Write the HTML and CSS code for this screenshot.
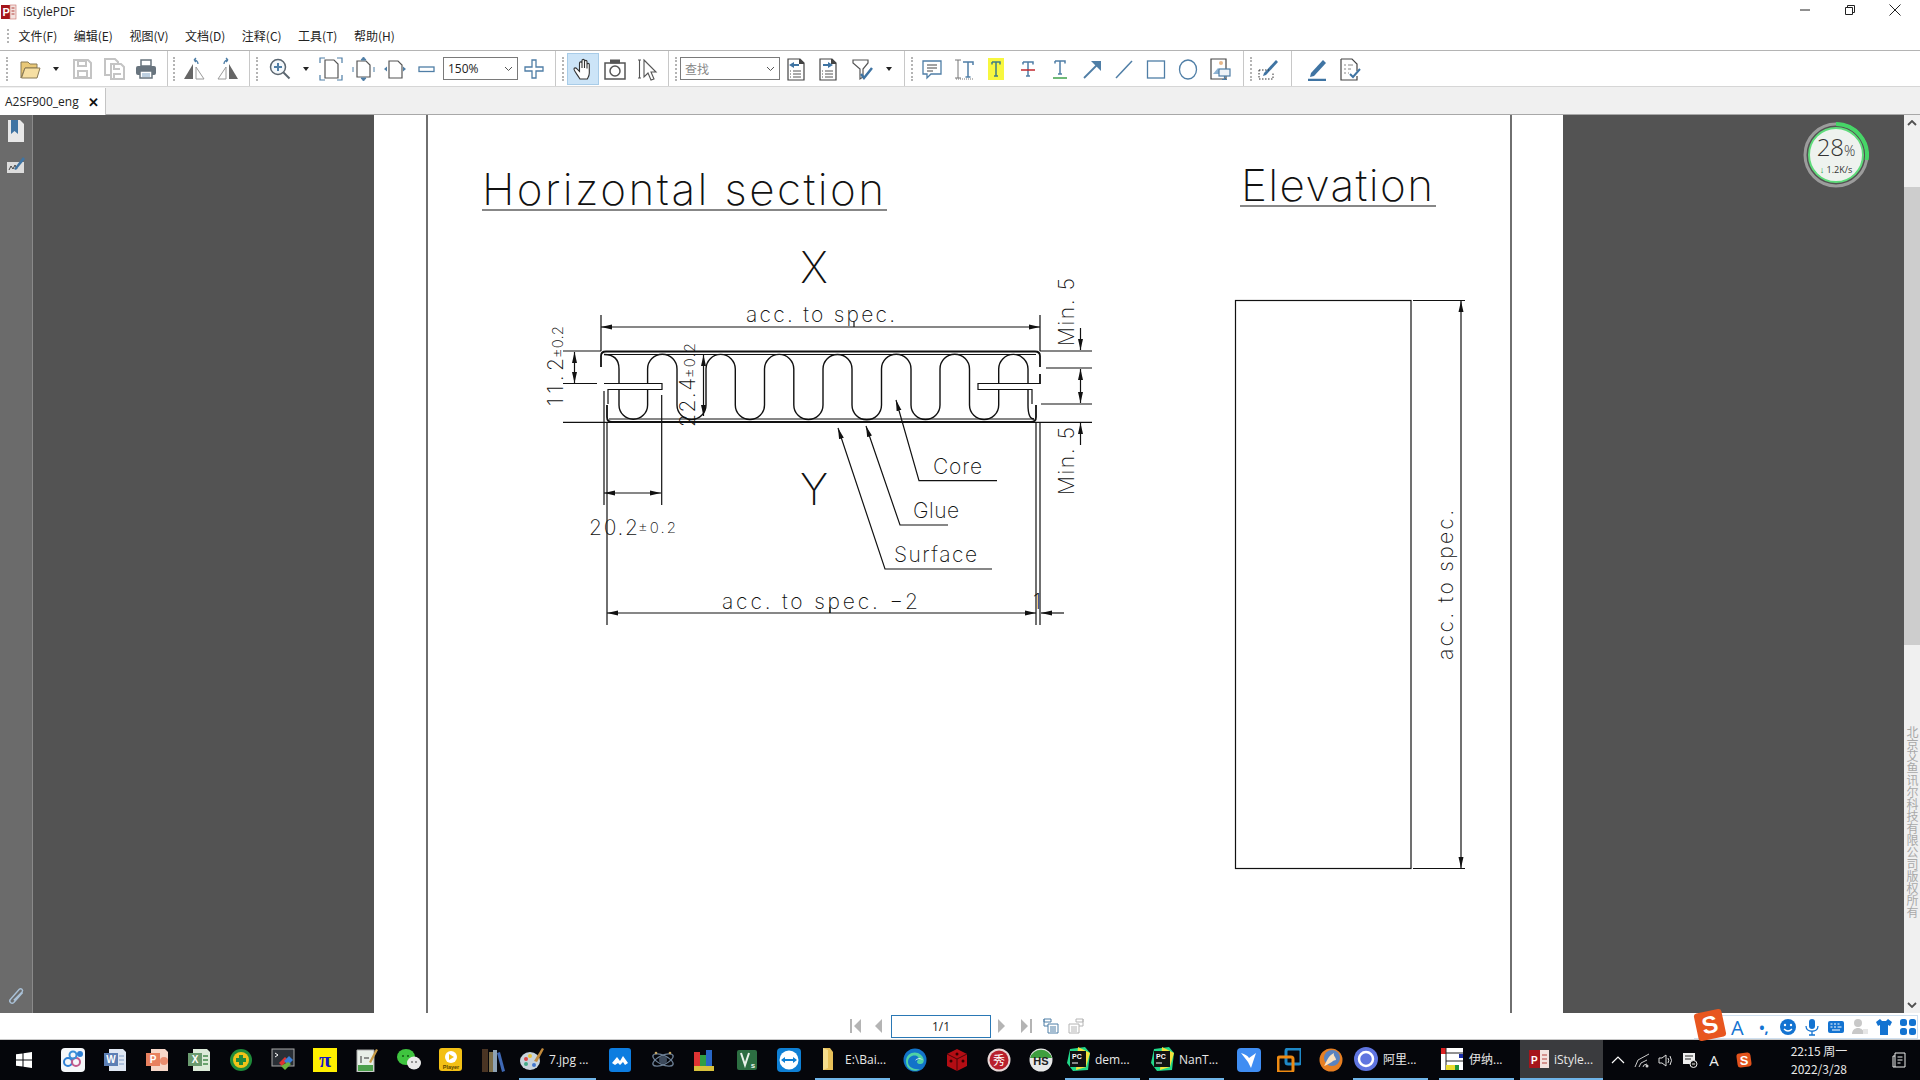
FILE: index.html
```html
<!DOCTYPE html>
<html lang="zh-CN">
<head>
    <meta charset="UTF-8">
    <title>iStylePDF</title>
    <link rel="stylesheet" href="styles.css">
</head>
<body>
    <div id="titlebar">
        <div class="title-left">
            <svg width="16" height="16" viewBox="0 0 16 16"><rect x="0" y="1" width="10" height="14" fill="#a5151b"/><rect x="9" y="1" width="6" height="14" fill="#f3e3e0" stroke="#c96b66" stroke-width=".6"/><text x="1.4" y="12" class="logo-p">P</text><path d="M10.5 4h3M10.5 7h3M10.5 10h3" stroke="#b3403c"/></svg>
            <span>iStylePDF</span>
        </div>
        <div class="win-controls">
            <svg width="14" height="14" viewBox="0 0 14 14"><path d="M2 7h10" stroke="#222" fill="none"/></svg>
            <svg width="14" height="14" viewBox="0 0 14 14"><path d="M2.5 4.5h7v7h-7zM4.5 4.5v-2h7v7h-2" stroke="#222" fill="none"/></svg>
            <svg width="14" height="14" viewBox="0 0 14 14"><path d="M1.5 1.5l11 11M12.5 1.5l-11 11" stroke="#222" fill="none"/></svg>
        </div>
    </div>
    <div id="menubar">
        <i class="grip"></i>
        <span>文件(F)</span><span>编辑(E)</span><span>视图(V)</span><span>文档(D)</span><span>注释(C)</span><span>工具(T)</span><span>帮助(H)</span>
    </div>

    <div id="toolbar">
        <div class="group">
            <i class="grip grip-first"></i>
            <button class="btn"><svg viewBox="0 0 24 24"><path d="M3 21V5h7l2 2h7v4H7L3 21z" fill="#e9c877" stroke="#8a7a55"/><path d="M3.5 21l3.5-10h15l-3 10z" fill="#f6dfa3" stroke="#8a7a55"/></svg></button>
            <button class="caret"><i></i></button>
            <button class="btn"><svg viewBox="0 0 24 24"><path d="M4 3h14l3 3v15H4z" fill="#fff" stroke="#c4c4c4" stroke-width="2"/><path d="M8 4h8v5H8zM8 14h9v6H8z" fill="none" stroke="#c4c4c4" stroke-width="2"/></svg></button>
            <button class="btn"><svg viewBox="0 0 24 24"><path d="M3 2h10l3 3v13H3z" fill="#fff" stroke="#c4c4c4" stroke-width="2"/><path d="M9 7h10l3 3v12H9z" fill="#fff" stroke="#c4c4c4" stroke-width="2"/><path d="M12 8v4h6M12 22v-5h7" fill="none" stroke="#c4c4c4" stroke-width="2"/></svg></button>
            <button class="btn"><svg viewBox="0 0 24 24"><path d="M7 9V3h10v6z" fill="#fff" stroke="#68747e" stroke-width="1.5"/><rect x="2" y="9" width="20" height="9" rx="2" fill="#68747e"/><path d="M6 14h12v7H6z" fill="#fff" stroke="#68747e" stroke-width="1.5"/><path d="M8 17h8M8 19h8" stroke="#7ea2c2"/></svg></button>
        </div>
        <div class="group group-flip">
            <i class="grip"></i>
            <button class="btn"><svg viewBox="0 0 24 24"><path d="M11 7v15H2z" fill="#666"/><path d="M14 10l8 12h-8z" fill="none" stroke="#9a9a9a"/><path d="M16 7c0-3-2-4-4-4M12 3l2-2M12 3l2 2" fill="none" stroke="#4f7ea6" stroke-width="1.3"/></svg></button>
            <button class="btn"><svg viewBox="0 0 24 24"><path d="M13 7v15h9z" fill="#666"/><path d="M10 10l-8 12h8z" fill="none" stroke="#9a9a9a"/><path d="M8 7c0-3 2-4 4-4M12 3l-2-2M12 3l-2 2" fill="none" stroke="#4f7ea6" stroke-width="1.3"/></svg></button>
        </div>
        <div class="group group-view">
            <i class="grip"></i>
            <button class="btn"><svg viewBox="0 0 24 24"><circle cx="10" cy="10" r="7.5" fill="#f4f8fb" stroke="#5b6670" stroke-width="1.5"/><path d="M6 10h8M10 6v8" stroke="#4f7ea6" stroke-width="2"/><path d="M15.5 15.5l6 6" stroke="#5b6670" stroke-width="2"/></svg></button>
            <button class="caret"><i></i></button>
            <button class="btn btn-fit"><svg viewBox="0 0 24 24"><path d="M6 3h9l4 4v14H6z" fill="#fff" stroke="#555" stroke-width="1.2"/><path d="M1 6V1h5M23 6V1h-5M1 18v5h5M23 18v5h-5" fill="none" stroke="#4f7ea6" stroke-width="1.2"/></svg></button>
            <button class="btn"><svg viewBox="0 0 24 24"><path d="M6 4h9l4 4v12H6z" fill="#fff" stroke="#555" stroke-width="1.2"/><path d="M12.5 0l-2.5 3h5zM12.5 24l-2.5-3h5zM2 10v5M23 10v5" fill="#4f7ea6" stroke="#4f7ea6"/></svg></button>
            <button class="btn"><svg viewBox="0 0 24 24"><path d="M6 4h9l4 4v13H6z" fill="#fff" stroke="#555" stroke-width="1.2"/><path d="M1 12l3-2.500v5zM23 12l-3-2.500v5z" fill="#4f7ea6"/></svg></button>
            <button class="btn"><svg viewBox="0 0 24 24"><rect x="4" y="10" width="15" height="4.500" fill="#fff" stroke="#4f7ea6" stroke-width="1.3"/></svg></button>
            <div class="combo combo-zoom"><span>150%</span><svg width="9" height="6" viewBox="0 0 9 6"><path d="M1 1l3.500 3.500L8 1" fill="none" stroke="#555"/></svg></div>
            <button class="btn"><svg viewBox="0 0 24 24"><path d="M10 3h4v7h7v4h-7v7h-4v-7H3v-4h7z" fill="#fff" stroke="#4f7ea6" stroke-width="1.3"/></svg></button>
        </div>
        <div class="group group-tools">
            <i class="grip"></i>
            <button class="btn btn-on"><svg viewBox="0 0 24 24"><path d="M9 22C6 17 3 14 3 12c0-1.500 2-1.500 3 0l2.500 2.500V6c0-1.500 2.500-1.500 2.500 0v5V3.500c0-1.500 2.500-1.500 2.500 0V11V4.500c0-1.500 2.500-1.500 2.500 0V11.500V7.500c0-1.500 2.300-1.500 2.300 0V16c0 3-1 4-2 6z" fill="#fff" stroke="#333" stroke-width="1.1"/></svg></button>
            <button class="btn"><svg viewBox="0 0 24 24"><rect x="2" y="6" width="20" height="16" fill="#fff" stroke="#555" stroke-width="1.5"/><rect x="7" y="2.500" width="10" height="4" fill="#555"/><circle cx="12" cy="14" r="5" fill="none" stroke="#555" stroke-width="1.5"/></svg></button>
            <button class="btn"><svg viewBox="0 0 24 24"><path d="M3 3h3M3 21h3M4.500 3v18M9 3l12 12h-5l3 7-3 1-3-7-4 4z" fill="#fff" stroke="#555" stroke-width="1.1"/></svg></button>
        </div>
        <div class="group">
            <i class="grip"></i>
            <div class="combo combo-find"><span>查找</span><svg width="9" height="6" viewBox="0 0 9 6"><path d="M1 1l3.500 3.500L8 1" fill="none" stroke="#555"/></svg></div>
            <button class="btn"><svg viewBox="0 0 24 24"><path d="M4 2h12l4 4v17H4z" fill="#fff" stroke="#444" stroke-width="1.2"/><path d="M15 2h1l4 4v1h-5z" fill="#444"/><path d="M5 8l5-3v2h5v2h-5v2z" fill="#3f74a3"/><path d="M9 14h8M9 17h8M9 20h8M6 14h1M6 17h1M6 20h1" stroke="#555"/></svg></button>
            <button class="btn"><svg viewBox="0 0 24 24"><path d="M4 2h12l4 4v17H4z" fill="#fff" stroke="#444" stroke-width="1.2"/><path d="M15 2h1l4 4v1h-5z" fill="#444"/><path d="M17 8l-5-3v2H7v2h5v2z" fill="#3f74a3"/><path d="M9 14h8M9 17h8M9 20h8M6 14h1M6 17h1M6 20h1" stroke="#555"/></svg></button>
            <button class="btn btn-filter"><svg viewBox="0 0 24 24"><path d="M2 3h15v3l-5 6v8l-3 2V12L2 6z" fill="#fff" stroke="#555" stroke-width="1.2"/><path d="M10 17l3 4 8-10" fill="none" stroke="#3f74a3" stroke-width="2.500"/></svg></button>
            <button class="caret"><i></i></button>
        </div>
        <div class="group group-notes">
            <i class="grip"></i>
            <button class="btn"><svg viewBox="0 0 24 24"><path d="M3 4h18v13H11l-4 4v-4H3z" fill="#fff" stroke="#4f7ea6" stroke-width="1.3"/><path d="M7 8h10M7 11h10M7 14h6" stroke="#444"/></svg></button>
            <button class="btn"><svg viewBox="0 0 24 24"><path d="M3 3h6M3 21h6M6 3v18" fill="none" stroke="#777"/><path d="M11 5h10v3M16 5v15M13.500 20h5" fill="none" stroke="#4f7ea6" stroke-width="1.5"/><path d="M4 22h18" stroke="#777" stroke-dasharray="1 1"/></svg></button>
            <button class="btn"><svg viewBox="0 0 24 24"><rect x="4" y="1" width="16" height="22" fill="#f7f73f"/><path d="M8 5h8v2.500M8 7.500V5M12 5v14M10 19h4" fill="none" stroke="#3e7c86" stroke-width="1.5"/></svg></button>
            <button class="btn"><svg viewBox="0 0 24 24"><path d="M7 5h10v2.500M7 7.500V5M12 5v14M10 19h4" fill="none" stroke="#4f7ea6" stroke-width="1.500"/><path d="M5 13h14" stroke="#c0272d" stroke-width="1.500"/></svg></button>
            <button class="btn"><svg viewBox="0 0 24 24"><path d="M7 4h10v2.500M7 6.500V4M12 4v13M10 17h4" fill="none" stroke="#4f7ea6" stroke-width="1.500"/><path d="M5 21h14" stroke="#3fa24a" stroke-width="1.500"/></svg></button>
            <button class="btn"><svg viewBox="0 0 24 24"><path d="M4 21L18 7" stroke="#4f7ea6" stroke-width="1.800"/><path d="M11 4h10v10z" fill="#4f7ea6"/></svg></button>
            <button class="btn"><svg viewBox="0 0 24 24"><path d="M4 21L20 4" stroke="#4f7ea6" stroke-width="1.500"/></svg></button>
            <button class="btn"><svg viewBox="0 0 24 24"><rect x="3.500" y="4" width="17" height="17" fill="#fff" stroke="#4f7ea6" stroke-width="1.300"/></svg></button>
            <button class="btn"><svg viewBox="0 0 24 24"><ellipse cx="12" cy="12.500" rx="8.500" ry="9.500" fill="#fff" stroke="#4f7ea6" stroke-width="1.300"/></svg></button>
            <button class="btn"><svg viewBox="0 0 24 24"><path d="M3 2h15v20H3z" fill="#fff" stroke="#444" stroke-width="1.200"/><circle cx="13" cy="6" r="2" fill="#e8b78a"/><path d="M5 17l5-6 3 6z" fill="#8fb4d4"/><rect x="11" y="12" width="11" height="7" fill="#eef3f7" stroke="#4f7ea6" stroke-width="1.200"/><path d="M16.500 19v3M14 22.500h5" stroke="#4f7ea6" stroke-width="1.200"/></svg></button>
        </div>
        <div class="group group-sign">
            <i class="grip"></i>
            <button class="btn"><svg viewBox="0 0 24 24"><path d="M8 16L20 3l2 2-12 13-3 1z" fill="#3f74a3"/><path d="M3 13h10M3 13v9h14v-6" fill="none" stroke="#333" stroke-dasharray="1.500 1.500"/></svg></button>
        </div>
        <div class="group group-last">
            <button class="btn"><svg viewBox="0 0 24 24"><path d="M6 16L18 3l3 3L9 19l-4 1z" fill="#3f74a3"/><path d="M3 23h18" stroke="#3f74a3" stroke-width="2.500"/></svg></button>
            <button class="btn"><svg viewBox="0 0 24 24"><path d="M4 2h11l5 5v7M20 19v4H4V2" fill="#fff" stroke="#444" stroke-width="1.200"/><path d="M7 8h2M11 8h5M7 12h2M11 12h3M7 16h2M11 16h1" stroke="#888"/><path d="M13 17l3 3 7-8" fill="none" stroke="#3f74a3" stroke-width="2"/></svg></button>
        </div>
    </div>

    <div id="tabbar">
        <div class="tab"><span>A2SF900_eng</span><b>✕</b></div>
    </div>

    <div id="main">
        <div id="sidebar">
            <div class="side-top">
                <svg width="20" height="24" viewBox="0 0 20 24"><path d="M2 1h12l4 4v18H2z" fill="#e8e8e8"/><path d="M5 1h7v14l-3.500-3L5 15z" fill="#3f74a3"/></svg>
                <svg width="20" height="20" viewBox="0 0 20 20"><rect x="1" y="7" width="17" height="11" fill="#dcdcdc"/><path d="M3 15l2-4 2 3 2-4 2 4" fill="none" stroke="#444"/><path d="M8 14L17 2l2 2-9 11z" fill="#3f74a3"/></svg>
            </div>
            <svg width="22" height="22" viewBox="0 0 20 20"><path d="M16 6l-8 9c-2 2-5-1-3-3l8-9c1.500-1.500 4 .5 2.500 2.500L8 13" fill="none" stroke="#a9c0d6" stroke-width="1.300"/></svg>
        </div>
        <div id="canvas">
            <svg class="page" width="1189" height="898" viewBox="374 115 1189 898">
                <defs>
                    <marker id="arrow" markerUnits="userSpaceOnUse" markerWidth="12" markerHeight="6" refX="11" refY="3" orient="auto-start-reverse"><path d="M0 .5L11 3L0 5.500z" fill="#111"/></marker>
                </defs>
                <path class="ln" d="M427 115V1013M1511 115V1013"/>

                <text class="t-title" x="482" y="205" textLength="402">Horizontal section</text>
                <path class="ln" d="M482 210H887"/>
                <text class="t-title" x="1241" y="201" textLength="192">Elevation</text>
                <path class="ln" d="M1240 206H1436"/>

                <text class="t-big" x="814" y="283" text-anchor="middle">X</text>
                <text class="t-big" x="814" y="505" text-anchor="middle">Y</text>

                <!-- panel -->
                <path class="ln ln-core" d="M604 354.500Q619 354.500 619 369V405A14.300 14.300 0 0 0 647.600 405V369A14.700 14.700 0 0 1 677 369V405A14.500 14.500 0 0 0 706 405V369A14.650 14.650 0 0 1 735.300 369V405A14.600 14.600 0 0 0 764.500 405V369A14.650 14.650 0 0 1 793.800 369V405A14.600 14.600 0 0 0 823 405V369A14.500 14.500 0 0 1 852 369V405A14.750 14.750 0 0 0 881.500 405V369A14.750 14.750 0 0 1 911 369V405A14.500 14.500 0 0 0 940 405V369A14.750 14.750 0 0 1 969.500 369V405A14.600 14.600 0 0 0 998.700 405V369A14.650 14.650 0 0 1 1028 369V405Q1028 419 1034 419"/>
                <path class="white" d="M603 383H662V389H609V405H603zM978 383H1035V389H978z"/>
                <path class="ln" d="M563 383.500H597M604 383.500H662V389.500H608V404"/>
                <path class="ln" d="M1040 383.500H978V389.500H1032V404"/>
                <path class="ln ln-panel" d="M601 367V356Q601 351.500 606 351.500H1035Q1040 351.500 1040 356V367M1040 374V384"/>
                <path class="ln" d="M604 354.500H1036"/>
                <path class="ln ln-panel" d="M607 405V417Q607 422 612 422H1031Q1036 422 1036 417V405"/>
                <path class="ln" d="M609 419H1034"/>

                <!-- dimensions -->
                <path class="ln" d="M601 315V351M1040 315V351"/>
                <path class="ln" d="M601 327H1040" marker-start="url(#arrow)" marker-end="url(#arrow)"/>
                <path class="ln" d="M854 327V322"/>
                <text class="t-dim" x="746" y="322" textLength="149">acc. to spec.</text>

                <path class="ln" d="M563 351H601M563 422.300H1092M1040 351H1092M1046 368H1092M1041 404H1092"/>
                <path class="ln" d="M574.500 352V383" marker-start="url(#arrow)" marker-end="url(#arrow)"/>
                <path class="ln" d="M1080.500 369V403" marker-start="url(#arrow)" marker-end="url(#arrow)"/>
                <path class="ln" d="M1080.500 328V350" marker-end="url(#arrow)"/>
                <path class="ln" d="M1080.500 445V423" marker-end="url(#arrow)"/>
                <path class="ln" d="M703.500 355V416" marker-start="url(#arrow)" marker-end="url(#arrow)"/>

                <text class="t-dim" transform="translate(563 406) rotate(-90)" textLength="48">11.2</text>
                <text class="t-small" transform="translate(563 358) rotate(-90)" textLength="32">±0.2</text>
                <text class="t-dim" transform="translate(695 427) rotate(-90)" textLength="49">22.4</text>
                <text class="t-small" transform="translate(695 378) rotate(-90)" textLength="35">±0.2</text>
                <text class="t-dim" transform="translate(1074 346) rotate(-90)" textLength="68">Min. 5</text>
                <text class="t-dim" transform="translate(1074 495) rotate(-90)" textLength="68">Min. 5</text>

                <path class="ln" d="M604 391V505M661.700 395V505M607 422V625"/>
                <path class="ln" d="M604 493H661" marker-start="url(#arrow)" marker-end="url(#arrow)"/>
                <text class="t-dim" x="589" y="535" textLength="49">20.2</text>
                <text class="t-small" x="638" y="533" textLength="38">±0.2</text>

                <path class="ln" d="M1036 422V625M1040 422V625"/>
                <path class="ln" d="M607 613H1036" marker-start="url(#arrow)" marker-end="url(#arrow)"/>
                <path class="ln" d="M830 613V607"/>
                <path class="ln" d="M1064 613H1041" marker-end="url(#arrow)"/>
                <text class="t-dim" x="722" y="609" textLength="196">acc. to spec. −2</text>
                <text class="t-dim" x="1033" y="609">1</text>

                <!-- leaders -->
                <path class="ln" d="M997 480.700H919L896 400" marker-end="url(#arrow)"/>
                <path class="ln" d="M948 525H900L866 426" marker-end="url(#arrow)"/>
                <path class="ln" d="M992 569H885L838 428" marker-end="url(#arrow)"/>
                <text class="t-dim" x="933" y="474" textLength="49">Core</text>
                <text class="t-dim" x="913" y="518" textLength="46">Glue</text>
                <text class="t-dim" x="894" y="562" textLength="83">Surface</text>

                <!-- elevation -->
                <rect class="ln" x="1235.500" y="300.500" width="175.500" height="568"/>
                <path class="ln" d="M1413 300.500H1465M1413 868.500H1465"/>
                <path class="ln" d="M1461 301V868" marker-start="url(#arrow)" marker-end="url(#arrow)"/>
                <text class="t-dim" transform="translate(1453 660) rotate(-90)" textLength="150">acc. to spec.</text>
            </svg>
            <div id="speed">
                <svg width="66" height="66" viewBox="0 0 66 66">
                    <circle cx="33" cy="33" r="31" fill="none" stroke="#9c9c9c" stroke-width="3"/>
                    <circle cx="33" cy="33" r="27" fill="#eef2ee" stroke="#5fdc7b" stroke-width="2"/>
                    <path d="M33 2A31 31 0 0 1 63.600 38" fill="none" stroke="#46d667" stroke-width="4"/>
                </svg>
                <div class="speed-text"><strong>28<small>%</small></strong><span><em>↓</em> 1.2K/s</span></div>
            </div>
        </div>
        <div id="scrollbar">
            <div class="sb-arrow"><svg width="10" height="6" viewBox="0 0 10 6"><path d="M1 5l4-4 4 4" fill="none" stroke="#505050" stroke-width="1.800"/></svg></div>
            <div class="sb-thumb"></div>
            <div class="sb-mark">北京艾鱼讯尔科技有限公司版权所有</div>
            <div class="sb-arrow sb-down"><svg width="10" height="6" viewBox="0 0 10 6"><path d="M1 1l4 4 4-4" fill="none" stroke="#505050" stroke-width="1.800"/></svg></div>
        </div>
    </div>

    <div id="pagebar">
        <svg class="nav" viewBox="0 0 14 16"><path d="M2 1h2v14H2zM13 1v14L6 8z" fill="#b4b4b4"/></svg>
        <svg class="nav nav-prev" viewBox="0 0 14 16"><path d="M11 1v14L4 8z" fill="#b4b4b4"/></svg>
        <div class="page-input">1/1</div>
        <svg class="nav" viewBox="0 0 14 16"><path d="M3 1v14l7-7z" fill="#b4b4b4"/></svg>
        <svg class="nav nav-next" viewBox="0 0 14 16"><path d="M1 1v14l7-7zM10 1h2v14h-2z" fill="#b4b4b4"/></svg>
        <svg class="nav nav-doc" viewBox="0 0 16 16"><path d="M1 1h7v3H1zM1 1v7h4M5 6h10v9H5z" fill="#fff" stroke="#4f7ea6"/><path d="M7 9h6M7 11h6M7 13h6" stroke="#4f7ea6"/></svg>
        <svg class="nav nav-doc" viewBox="0 0 16 16"><path d="M8 1h7v3H8zM15 1v7h-4M1 6h10v9H1z" fill="#fff" stroke="#b4b4b4"/><path d="M3 9h6M3 11h6M3 13h6" stroke="#b4b4b4"/></svg>
        <div id="ime">
            <div class="ime-s">S</div>
            <span class="ime-a">A</span>
            <span class="ime-p">•,</span>
            <svg width="18" height="18" viewBox="0 0 18 18"><circle cx="9" cy="9" r="8" fill="#1373d1"/><circle cx="6" cy="7" r="1.200" fill="#fff"/><circle cx="12" cy="7" r="1.200" fill="#fff"/><path d="M5 11q4 4 8 0" fill="none" stroke="#fff" stroke-width="1.300"/></svg>
            <svg width="18" height="18" viewBox="0 0 18 18"><rect x="6" y="1" width="6" height="10" rx="3" fill="#1373d1"/><path d="M3 8c0 7 12 7 12 0M9 13v4M6 17h6" fill="none" stroke="#1373d1" stroke-width="1.300"/></svg>
            <svg width="18" height="18" viewBox="0 0 18 18"><rect x="1" y="3" width="16" height="12" rx="2" fill="#1373d1"/><path d="M3.500 6h2M7 6h2M10.500 6h2M3.500 9h2M7 9h2M10.500 9h4M5 12h8" stroke="#fff" stroke-width="1.200"/></svg>
            <svg width="18" height="18" viewBox="0 0 18 18"><circle cx="7" cy="5" r="4" fill="#c8c8c8"/><path d="M1 16c0-8 12-8 12 0z" fill="#c8c8c8"/><path d="M12 11h5v5h-5z" fill="#e6e6e6"/></svg>
            <svg width="18" height="18" viewBox="0 0 18 18"><path d="M5 1L1 4l2 4 2-1v10h8V7l2 1 2-4-4-3-2 2H7z" fill="#1373d1"/></svg>
            <svg width="18" height="18" viewBox="0 0 18 18"><rect x="1" y="1" width="7" height="7" rx="2.500" fill="#1373d1"/><rect x="10" y="1" width="7" height="7" rx="2.500" fill="#1373d1"/><rect x="1" y="10" width="7" height="7" rx="2.500" fill="#1373d1"/><rect x="10" y="10" width="7" height="7" rx="2.500" fill="#1373d1"/></svg>
        </div>
    </div>

    <div id="taskbar">
        <div class="start"><svg width="16" height="16" viewBox="0 0 16 16"><path d="M0 2.300L6.500 1.400V7.500H0zM7.500 1.200L16 0V7.500H7.500zM0 8.500H6.500V14.600L0 13.700zM7.500 8.500H16V16L7.500 14.800z" fill="#fff"/></svg></div>
        <div class="task"><svg viewBox="0 0 24 24"><rect width="24" height="24" rx="4" fill="#f5f7fa"/><circle cx="7" cy="14" r="4" fill="none" stroke="#2f7fd4" stroke-width="2"/><circle cx="15" cy="14" r="4" fill="none" stroke="#c25a8c" stroke-width="2"/><circle cx="12" cy="7" r="3.500" fill="none" stroke="#3a8fd8" stroke-width="2"/><circle cx="19" cy="6" r="3" fill="#2f7fd4"/></svg></div>
        <div class="task"><svg viewBox="0 0 24 24"><path d="M6 1h14l3 3v19H6z" fill="#dfe7f3"/><rect x="1" y="5" width="14" height="13" fill="#5d7fb5"/><text x="8" y="15" class="ti-w" text-anchor="middle">W</text><path d="M16 8h5M16 12h5M16 16h5" stroke="#7f9cc6"/></svg></div>
        <div class="task"><svg viewBox="0 0 24 24"><path d="M6 1h14l3 3v19H6z" fill="#f7d6c8"/><rect x="1" y="5" width="14" height="13" fill="#e8805f"/><circle cx="19" cy="13" r="4" fill="#e98c6e"/><text x="8" y="15" class="ti-w" text-anchor="middle">P</text></svg></div>
        <div class="task"><svg viewBox="0 0 24 24"><path d="M6 1h14l3 3v19H6z" fill="#dcebd9"/><rect x="1" y="5" width="14" height="13" fill="#6a9a6f"/><path d="M16 8h5M16 12h5M16 16h5" stroke="#6aa36f" stroke-width="2"/><text x="8" y="15" class="ti-w" text-anchor="middle">X</text></svg></div>
        <div class="task"><svg viewBox="0 0 24 24"><circle cx="12" cy="12" r="11" fill="#1f8b3a"/><circle cx="12" cy="12" r="8" fill="#f0c419"/><path d="M10 7h4v3h3v4h-3v3h-4v-3H7v-4h3z" fill="#1f8b3a"/></svg></div>
        <div class="task"><svg viewBox="0 0 24 24"><rect x="1" y="1" width="22" height="17" fill="#2a2f36" stroke="#aaa"/><path d="M4 5l3 2-3 2" fill="none" stroke="#fff"/><path d="M8 15l6-6 3 3-6 6z" fill="#d33"/><path d="M13 13l5-5 4 4-5 5z" fill="#3b7fd8"/><path d="M10 18l4 4 6-6-3-2z" fill="#6cb33f"/></svg></div>
        <div class="task"><svg viewBox="0 0 24 24"><rect width="24" height="24" fill="#ffef00"/><text x="12" y="19" class="ti-pi" text-anchor="middle">π</text></svg></div>
        <div class="task"><svg viewBox="0 0 24 24"><path d="M2 2h17v22H2z" fill="#e8efe8" stroke="#aaa"/><rect x="3" y="17" width="15" height="6" fill="#4ca04c"/><path d="M6 8v7M9 10h5" stroke="#333"/><path d="M14 14L21 1l2 1-7 13z" fill="#c79a45"/></svg></div>
        <div class="task"><svg viewBox="0 0 24 24"><ellipse cx="9" cy="9" rx="9" ry="8" fill="#3fc43f"/><ellipse cx="17" cy="15" rx="7" ry="6.500" fill="#e9e9e9"/><circle cx="6" cy="8" r="1" fill="#135a13"/><circle cx="11" cy="8" r="1" fill="#135a13"/><circle cx="15" cy="14" r="1" fill="#777"/><circle cx="19" cy="14" r="1" fill="#777"/></svg></div>
        <div class="task"><svg viewBox="0 0 24 24"><rect width="23" height="23" rx="3" fill="#f3c015"/><circle cx="12" cy="9" r="6" fill="#fff"/><path d="M10 6l5 3-5 3z" fill="#f3c015"/><text x="12" y="21" class="ti-s" text-anchor="middle">Player</text></svg></div>
        <div class="task"><svg viewBox="0 0 24 24"><rect x="1" y="1" width="6" height="23" fill="#4a3423"/><rect x="8" y="4" width="4" height="20" fill="#7e6f4a"/><rect x="12" y="2" width="4" height="22" fill="#8fa3b5"/><path d="M16 5l3-1 5 19-3 1z" fill="#3f68b5"/></svg></div>
        <div class="task-app task-paint"><svg viewBox="0 0 24 24"><ellipse cx="10" cy="14" rx="10" ry="9" fill="#c7d3dc"/><circle cx="6" cy="12" r="2" fill="#d44"/><circle cx="10" cy="9" r="2" fill="#e9c53c"/><circle cx="6" cy="17" r="2" fill="#4a8"/><circle cx="14" cy="18" r="2" fill="#47c"/><path d="M14 14L22 1l2 1-7 13z" fill="#c28a3c"/></svg><span>7.jpg ...</span></div>
        <div class="task"><svg viewBox="0 0 24 24"><rect width="22" height="24" rx="3" fill="#0d7de0"/><path d="M3 15l5-6 3 4 3-5 5 7-3 2-2-3-3 3-2-2-3 2z" fill="#fff"/></svg></div>
        <div class="task"><svg viewBox="0 0 24 24"><ellipse cx="12" cy="12" rx="11" ry="4.500" fill="none" stroke="#6c7f95" stroke-width="1.300" transform="rotate(25 12 12)"/><ellipse cx="12" cy="12" rx="11" ry="4.500" fill="none" stroke="#6c7f95" stroke-width="1.300" transform="rotate(-25 12 12)"/><circle cx="12" cy="12" r="4" fill="#3d4a5c"/><circle cx="5" cy="5" r="1.300" fill="#c2a565"/><circle cx="19" cy="5" r="1.300" fill="#c2a565"/></svg></div>
        <div class="task"><svg viewBox="0 0 24 24"><rect x="1" y="4" width="6" height="14" fill="#d33"/><rect x="7" y="7" width="6" height="11" fill="#2f9e44"/><rect x="13" y="2" width="6" height="16" fill="#2866c7"/><rect x="1" y="18" width="20" height="5" fill="#d8c13c"/></svg></div>
        <div class="task"><svg viewBox="0 0 24 24"><rect x="2" y="2" width="20" height="20" rx="2" fill="#2c6e42"/><path d="M6 5l4 12 4-12" fill="none" stroke="#e8f2ea" stroke-width="2"/><text x="18" y="20" class="ti-s ti-vs" text-anchor="middle">s</text></svg></div>
        <div class="task"><svg viewBox="0 0 24 24"><rect width="24" height="24" rx="4" fill="#0e7fd4"/><circle cx="12" cy="12" r="9.500" fill="#fff"/><path d="M4 12l4-3v2h8V9l4 3-4 3v-2H8v2z" fill="#0e7fd4"/></svg></div>
        <div class="task-app task-gap"><svg viewBox="0 0 24 24"><path d="M7 1h7l3 4v18H7z" fill="#e8c15a"/><path d="M7 1v22l5-2V3z" fill="#f6dd8c"/></svg><span>E:\Bai...</span></div>
        <div class="task"><svg viewBox="0 0 24 24"><circle cx="12" cy="12" r="11.500" fill="#1273c9"/><path d="M3 13C3 6 10 3 15 5c5 2 7 7 5 10-2 2-6 1-6-1 0-2 3-2 1-5-3-3-10-1-10 5 0 5 6 8 12 7C12 25 3 22 3 13z" fill="#4fd1a5"/><path d="M12 13c2-4 7-3 9 0-1-2-6-3-9 0z" fill="#fff"/></svg></div>
        <div class="task"><svg viewBox="0 0 24 24"><path d="M12 1l10 5v12l-10 5-10-5V6z" fill="#b30d14"/><path d="M2 6l10 5 10-5M12 11v12" stroke="#4b0508" fill="none"/><circle cx="12" cy="6" r="1.500" fill="#300"/><circle cx="6" cy="13" r="1.500" fill="#300"/><circle cx="18" cy="13" r="1.500" fill="#300"/></svg></div>
        <div class="task"><svg viewBox="0 0 24 24"><circle cx="12" cy="12" r="11.500" fill="#e8d8d8"/><circle cx="12" cy="12" r="9.500" fill="#b81f2c"/><text x="12" y="16.500" class="ti-cjk" text-anchor="middle">秀</text></svg></div>
        <div class="task"><svg viewBox="0 0 24 24"><circle cx="12" cy="12" r="11.500" fill="#e8e8e8"/><path d="M1 10a11.500 11.500 0 0 1 22 0z" fill="#3e9e3e"/><text x="12" y="16.500" class="ti-hs" text-anchor="middle">HS</text></svg></div>
        <div class="task-app task-gap-wide"><svg viewBox="0 0 24 24"><path d="M4 2l15-2 5 6-2 17-15 1-6-8z" fill="#21d789"/><path d="M12 0l12 6-4 14-10 3z" fill="#f5e23c"/><rect x="4" y="4" width="16" height="16" fill="#111"/><text x="6" y="12" class="ti-pc">PC</text><path d="M6 16h6" stroke="#fff"/></svg><span>dem...</span></div>
        <div class="task-app task-gap-wider"><svg viewBox="0 0 24 24"><path d="M4 2l15-2 5 6-2 17-15 1-6-8z" fill="#21d789"/><path d="M12 0l12 6-4 14-10 3z" fill="#f5e23c"/><rect x="4" y="4" width="16" height="16" fill="#111"/><text x="6" y="12" class="ti-pc">PC</text><path d="M6 16h6" stroke="#fff"/></svg><span>NanT...</span></div>
        <div class="task"><svg viewBox="0 0 24 24"><rect width="24" height="24" rx="4" fill="#3f8df2"/><path d="M4 5c4 1 7 3 8 5l7-5-5 15-3-6z" fill="#fff"/></svg></div>
        <div class="task task-close"><svg viewBox="0 0 24 24"><rect x="9" y="1" width="15" height="15" rx="2" fill="none" stroke="#1e88c7" stroke-width="3"/><rect x="1" y="9" width="15" height="15" rx="2" fill="none" stroke="#ee8a12" stroke-width="3"/></svg></div>
        <div class="task"><svg viewBox="0 0 24 24"><circle cx="12" cy="12" r="11.500" fill="#e77f22"/><circle cx="13" cy="10" r="8" fill="#5a83c0"/><path d="M5 18c3-5 4-10 10-13-1 3 2 4 2 7-3 0-4 3-12 6z" fill="#fbe2c0"/></svg></div>
        <div class="task-app task-gap-ali"><svg viewBox="0 0 24 24"><circle cx="12" cy="12" r="12" fill="#5f75e0"/><circle cx="12" cy="12" r="7" fill="none" stroke="#fff" stroke-width="2.500"/></svg><span>阿里...</span></div>
        <div class="task-app task-gap-yina"><svg viewBox="0 0 24 24"><rect x="1" y="1" width="22" height="22" fill="#fff"/><rect x="1" y="1" width="5" height="6" fill="#d22"/><path d="M6 1v22M6 6h17M6 14h17" stroke="#222"/><rect x="19" y="7" width="4" height="4" fill="#1b2fa8"/><rect x="6" y="18" width="9" height="5" fill="#eadb2c"/><rect x="15" y="18" width="4" height="5" fill="#21953c"/></svg><span>伊纳...</span></div>
        <div class="task-app task-active"><svg viewBox="0 0 24 24"><rect x="2" y="3" width="13" height="18" fill="#a5151b"/><rect x="13" y="3" width="9" height="18" fill="#f3e3e0"/><text x="4" y="17" class="ti-w">P</text><path d="M15 8h5M15 12h5M15 16h5" stroke="#b3403c"/></svg><span>iStyle...</span></div>
        <div class="tray">
            <svg viewBox="0 0 16 16"><path d="M2 11l6-6 6 6" fill="none" stroke="#fff" stroke-width="1.200"/></svg>
            <svg viewBox="0 0 16 16"><path d="M1 15l3-7 11-6M5 15l2-4 6-3M9 15l1-2 3-1" fill="none" stroke="#ccc"/><circle cx="13" cy="14" r="1.500" fill="#ccc"/></svg>
            <svg viewBox="0 0 16 16"><path d="M1 6h3l4-3v11l-4-3H1z" fill="none" stroke="#ddd"/><path d="M10 6q1.500 2.500 0 5M12 4q3 4.500 0 9" fill="none" stroke="#ddd"/></svg>
            <svg viewBox="0 0 16 16"><rect x="1" y="1" width="12" height="11" fill="#eee"/><path d="M3 4h8M3 7h6" stroke="#222"/><circle cx="11.500" cy="12" r="3.500" fill="#111" stroke="#eee"/><path d="M10 12h3" stroke="#eee"/></svg>
            <span class="tray-a">A</span>
            <svg class="tray-sogou" viewBox="0 0 16 16"><rect x="1" y="1" width="14" height="14" rx="3" fill="#e2521c" transform="rotate(-8 8 8)"/><text x="8" y="13" class="ti-sg" text-anchor="middle">S</text></svg>
        </div>
        <div class="clock"><span>22:15 周一</span><span>2022/3/28</span></div>
        <div class="action"><svg width="16" height="16" viewBox="0 0 16 16"><path d="M2 4h2M4 1h10v14H4zM2 4v11h2M6.500 5h5M6.500 8h5M6.500 11h3" fill="none" stroke="#eee"/></svg></div>
    </div>
</body>
</html>
```

FILE: styles.css
```css
* {
    box-sizing: border-box;
}

body {
    margin: 0;
    width: 1920px;
    height: 1080px;
    overflow: hidden;
    display: flex;
    flex-direction: column;
    background: #fff;
    font-family: "Noto Sans CJK SC", "Open Sans", sans-serif;
    font-size: 12px;
    color: #222;
}

#titlebar {
    height: 24px;
    display: flex;
    justify-content: space-between;
    align-items: center;
}

.title-left {
    display: flex;
    align-items: center;
    gap: 6px;
    padding: 0 0 1px 1px;
    font-family: "Open Sans", sans-serif;
    font-size: 12px;
}

.logo-p {
    font: bold 11px "Liberation Sans", sans-serif;
    fill: #fff;
}

.win-controls {
    display: flex;
    gap: 31px;
    padding: 0 18px 4px 0;
}

#menubar {
    height: 27px;
    display: flex;
    align-items: center;
    gap: 16.500px;
    padding: 0 0 3px 7px;
    border-bottom: 1px solid #b4b4b4;
}

#menubar .grip {
    height: 14px;
    margin-right: -7px;
}

.grip {
    display: block;
    width: 2px;
    height: 24px;
    flex: none;
    border-left: 2px dotted #b4b4b4;
}

#toolbar {
    height: 36px;
    display: flex;
    border-bottom: 1px solid #d6d6d6;
}

.group {
    height: 35px;
    display: flex;
    align-items: center;
    padding: 0 5px 0 6px;
    border-right: 1px solid #c8c8c8;
}

.group .grip {
    margin-right: 3px;
}

.group .grip-first {
    margin-right: 6px;
}

.group-flip {
    padding-left: 5px;
}

.group-flip .btn + .btn {
    margin-left: 2px;
}

.group-view .grip {
    margin-right: 6px;
}

.group-tools .btn-on {
    background: #cce4f7;
    outline: 1px solid #a8cce8;
    outline-offset: -1px;
}

.group-notes {
    padding-right: 7px;
}

.group-sign {
    padding-right: 7px;
}

.group-sign .grip {
    margin-right: 0;
}

.group-last {
    border-right: none;
    padding-left: 9px;
}

.btn {
    width: 32px;
    height: 32px;
    flex: none;
    padding: 4px;
    border: none;
    background: none;
    display: flex;
    align-items: center;
    justify-content: center;
}

.btn svg {
    width: 24px;
    height: 24px;
    display: block;
}

.caret {
    width: 20px;
    height: 32px;
    flex: none;
    padding: 0;
    border: none;
    background: none;
    display: flex;
    align-items: center;
    justify-content: center;
}

.caret i {
    display: block;
    border-left: 3.500px solid transparent;
    border-right: 3.500px solid transparent;
    border-top: 4px solid #222;
}

.btn-fit {
    margin-left: -1px;
}

.btn-filter {
    margin-left: 3px;
}

.combo {
    height: 23px;
    flex: none;
    display: flex;
    justify-content: space-between;
    align-items: center;
    padding: 0 4px;
    border: 1px solid #7a7a7a;
    font-family: "Open Sans", sans-serif;
}

.combo-zoom {
    width: 75px;
}

.combo-find {
    width: 100px;
    color: #888;
    font-family: "Noto Sans CJK SC", sans-serif;
}

#tabbar {
    height: 28px;
    display: flex;
    align-items: flex-end;
    background: #f0f0f0;
    border-bottom: 1px solid #a8a8a8;
}

.tab {
    width: 106px;
    height: 27px;
    display: flex;
    align-items: center;
    justify-content: space-between;
    padding: 0 6px 0 5px;
    margin-bottom: -1px;
    background: #fff;
    border-right: 1px solid #c4c4c4;
    font-family: "Open Sans", sans-serif;
}

.tab b {
    font-size: 13px;
    color: #111;
}

#main {
    height: 898px;
    display: flex;
}

#sidebar {
    width: 33px;
    flex: none;
    display: flex;
    flex-direction: column;
    justify-content: space-between;
    align-items: center;
    padding: 4px 0 5px;
    background: #6b6b6b;
    border-right: 1px solid #8a8a8a;
}

.side-top {
    display: flex;
    flex-direction: column;
    align-items: center;
    gap: 12px;
}

#canvas {
    flex: 1;
    position: relative;
    display: flex;
    justify-content: center;
    background: #535353;
}

.page {
    display: block;
    background: #fff;
}

.ln {
    fill: none;
    stroke: #111;
    stroke-width: 1.200;
}

.ln-core {
    stroke-width: 1.400;
}

.ln-panel {
    stroke-width: 1.800;
}

.white {
    fill: #fff;
}

.page text {
    font-family: "Inter", "Open Sans", sans-serif;
    font-weight: 200;
    fill: #111;
}

.t-title {
    font-size: 44px;
}

.t-big {
    font-size: 43px;
}

.t-dim {
    font-size: 21px;
}

.t-small {
    font-size: 15px;
}

#speed {
    position: absolute;
    left: 1770px;
    top: 7px;
    width: 66px;
    height: 66px;
}

#speed svg {
    display: block;
}

.speed-text {
    position: absolute;
    inset: 0;
    display: flex;
    flex-direction: column;
    align-items: center;
    justify-content: center;
    font-family: "Open Sans", sans-serif;
    color: #333;
}

.speed-text strong {
    font-weight: 300;
    font-size: 24px;
    line-height: 26px;
}

.speed-text small {
    font-size: 14px;
}

.speed-text span {
    font-size: 9px;
    line-height: 12px;
}

.speed-text em {
    font-style: normal;
    color: #22a043;
}

#scrollbar {
    width: 16px;
    flex: none;
    position: relative;
    display: flex;
    flex-direction: column;
    background: #f0f0f0;
}

.sb-arrow {
    height: 16px;
    display: flex;
    align-items: center;
    justify-content: center;
}

.sb-thumb {
    height: 458px;
    margin-top: 56px;
    background: #cdcdcd;
}

.sb-down {
    margin-top: auto;
}

.sb-mark {
    position: absolute;
    top: 611px;
    left: 1px;
    width: 14px;
    writing-mode: vertical-rl;
    font-size: 12px;
    line-height: 14px;
    color: #a8a8a8;
}

#pagebar {
    height: 27px;
    position: relative;
    display: flex;
    align-items: center;
    padding-left: 848px;
    border-bottom: 1px solid #c8c8c8;
}

.nav {
    width: 14px;
    height: 16px;
    flex: none;
}

.nav-prev {
    margin: 0 6px 0 9px;
}

.page-input {
    width: 100px;
    height: 23px;
    flex: none;
    margin-right: 4px;
    text-align: center;
    line-height: 21px;
    border: 1px solid #2a78b5;
    font-family: "Open Sans", sans-serif;
}

.nav-next {
    margin-left: 11px;
}

.nav-doc {
    width: 16px;
    margin-left: 9px;
}

#ime {
    position: absolute;
    left: 1694px;
    top: 2px;
    width: 224px;
    height: 24px;
    display: flex;
    align-items: center;
    gap: 6px;
    padding-left: 38px;
    background: #fff;
    border: 1px solid #cfe0f0;
    border-left: none;
}

.ime-s {
    position: absolute;
    left: 2px;
    top: -5px;
    width: 28px;
    height: 28px;
    border-radius: 3px;
    background: #e8561f;
    color: #fff;
    font: bold 24px/28px "Liberation Sans", sans-serif;
    text-align: center;
    transform: rotate(-12deg);
}

.ime-a {
    font: 20px "Open Sans", sans-serif;
    color: #1373d1;
    width: 18px;
    margin-left: -1px;
}

.ime-p {
    font: bold 14px "Open Sans", sans-serif;
    color: #1373d1;
    width: 18px;
    text-align: center;
}

#taskbar {
    height: 40px;
    display: flex;
    background: #05060b;
    color: #e8e8e8;
}

.start {
    width: 52px;
    flex: none;
    display: flex;
    align-items: center;
    justify-content: center;
    padding-right: 4px;
}

.task {
    width: 42px;
    flex: none;
    display: flex;
    align-items: center;
    justify-content: center;
}

.task-close {
    margin-left: -2px;
}

.task svg,
.task-app svg {
    width: 24px;
    height: 24px;
    flex: none;
}

.task-app {
    width: 75px;
    flex: none;
    display: flex;
    align-items: center;
    gap: 5px;
    margin: 0 4px 0 5px;
    padding-left: 1px;
    border-bottom: 2px solid #6fb4e8;
    overflow: hidden;
    white-space: nowrap;
}

.task-paint {
    width: 77px;
}

.task-app span {
    font-family: "Open Sans", "Noto Sans CJK SC", sans-serif;
    font-size: 12px;
}

.task-gap {
    margin-left: 5px;
}

.task-gap-wide {
    margin-left: 3px;
}

.task-gap-wider {
    margin-left: 5px;
}

.task-gap-ali {
    margin-left: 1px;
}

.task-gap-yina {
    margin-left: 7px;
}

.task-active {
    width: 83px;
    margin: 0 0 0 2px;
    padding-left: 7px;
    gap: 3px;
    background: #3a3b3e;
}

.ti-w {
    font: bold 10px "Liberation Sans", sans-serif;
    fill: #fff;
}

.ti-pi {
    font: bold 22px "Liberation Serif", serif;
    fill: #1414c8;
}

.ti-s {
    font: bold 5.500px "Liberation Sans", sans-serif;
    fill: #5a4400;
}

.ti-vs {
    font-size: 8px;
    fill: #e8f2ea;
}

.ti-cjk {
    font: 12px "Noto Sans CJK SC", sans-serif;
    fill: #fff;
}

.ti-hs {
    font: bold 11px "Liberation Sans", sans-serif;
    fill: #222;
}

.ti-pc {
    font: bold 7px "Liberation Sans", sans-serif;
    fill: #fff;
}

.ti-sg {
    font: bold 13px "Liberation Sans", sans-serif;
    fill: #fff;
}

.tray {
    display: flex;
    align-items: center;
    gap: 8px;
    margin-left: 7px;
}

.tray svg {
    width: 16px;
    height: 16px;
    flex: none;
}

.tray .tray-sogou {
    margin-left: 6px;
}

.tray-a {
    width: 16px;
    text-align: center;
    font: 15px "Open Sans", sans-serif;
    color: #eee;
}

.clock {
    width: 72px;
    margin-left: 31px;
    display: flex;
    flex-direction: column;
    align-items: center;
    justify-content: center;
    font-size: 12px;
    line-height: 18px;
}

.action {
    flex: 1;
    display: flex;
    align-items: center;
    justify-content: center;
    padding-left: 22px;
}
```
